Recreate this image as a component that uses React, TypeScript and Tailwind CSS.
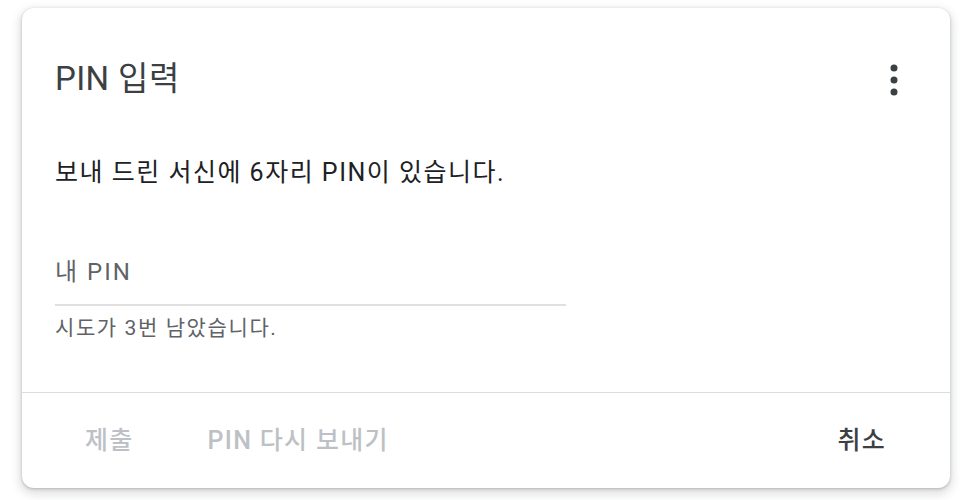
import React from 'react';

const font = { fontFamily: '"Roboto", "Noto Sans CJK KR", sans-serif' };

const MoreVert: React.FC = () => (
  <svg width="14" height="36" viewBox="0 0 14 36" className="text-[#3c4043]">
    <circle cx="7" cy="6" r="3.5" fill="currentColor" />
    <circle cx="7" cy="18" r="3.5" fill="currentColor" />
    <circle cx="7" cy="30" r="3.5" fill="currentColor" />
  </svg>
);

const App: React.FC = () => {
  return (
    <div className="w-[964px] h-[500px] bg-white pt-[8px] pl-[22px]" style={font}>
      <div className="w-[928px] h-[480px] bg-white rounded-[12px] shadow-[0_1px_3px_rgba(60,64,67,0.3),0_4px_8px_3px_rgba(60,64,67,0.15)] flex flex-col">
        <div className="flex-1 px-[33px]">
          <div className="flex items-center justify-between mt-[50px]">
            <h1 className="text-[33px] tracking-[0.4px] text-[#3c4043] leading-none">PIN 입력</h1>
            <div className="mr-[16px] mt-[4px]">
              <MoreVert />
            </div>
          </div>
          <p className="mt-[62px] text-[25px] tracking-[1.5px] text-[#202124] leading-none">
            보내 드린 서신에 6자리 PIN이 있습니다.
          </p>
          <div className="w-[511px] mt-[75px]">
            <div className="text-[24px] tracking-[2px] text-[#5f6368] leading-none pb-[20px]">내 PIN</div>
            <div className="h-[2px] bg-[#e0e0e0]" />
            <div className="text-[21px] tracking-[1.6px] text-[#5f6368] leading-none mt-[12px]">시도가 3번 남았습니다.</div>
          </div>
        </div>
        <div className="h-px bg-[#dadce0]" />
        <div className="h-[95px] flex items-center justify-between pl-[63px] pr-[64px]">
          <div className="flex items-center gap-[74px]">
            <button className="text-[25px] font-medium tracking-[1.3px] text-[#bdc1c6]">제출</button>
            <button className="text-[25px] font-medium tracking-[1.3px] text-[#bdc1c6]">PIN 다시 보내기</button>
          </div>
          <button className="text-[25px] font-medium tracking-[1.3px] text-[#3c4043]">취소</button>
        </div>
      </div>
    </div>
  );
};

export default App;
